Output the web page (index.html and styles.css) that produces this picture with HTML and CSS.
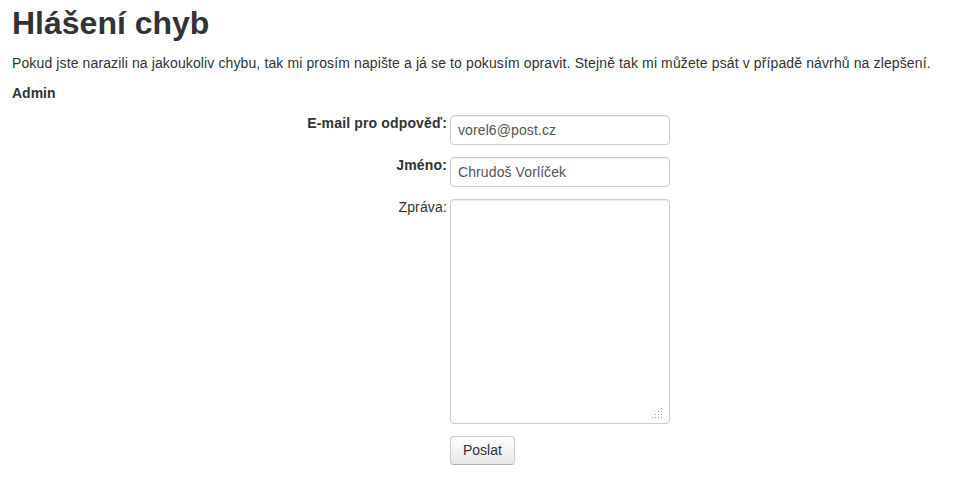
FILE: index.html
```html
<!DOCTYPE html>
<html lang="cs">
<head>
<meta charset="utf-8">
<title>Hlášení chyb</title>
<link rel="stylesheet" href="styles.css">
</head>
<body>
<div class="page">
  <h1 class="title">Hlášení chyb</h1>
  <p class="intro">Pokud jste narazili na jakoukoliv chybu, tak mi prosím napište a já se to pokusím opravit. Stejně tak mi můžete psát v případě návrhů na zlepšení.</p>
  <p class="section">Admin</p>
  <form class="form">
    <label class="label strong" for="email">E-mail pro odpověď:</label>
    <input class="field" id="email" type="text" value="vorel6@post.cz">
    <label class="label strong" for="name">Jméno:</label>
    <input class="field" id="name" type="text" value="Chrudoš Vorlíček">
    <label class="label" for="msg">Zpráva:</label>
    <div class="area-wrap">
      <textarea class="field area" id="msg"></textarea>
      <svg class="grip" width="10" height="10" viewBox="0 0 10 10" aria-hidden="true">
        <rect x="9" y="0" width="1" height="1"/>
        <rect x="6" y="3" width="1" height="1"/><rect x="9" y="3" width="1" height="1"/>
        <rect x="3" y="6" width="1" height="1"/><rect x="6" y="6" width="1" height="1"/><rect x="9" y="6" width="1" height="1"/>
        <rect x="0" y="9" width="1" height="1"/><rect x="3" y="9" width="1" height="1"/><rect x="6" y="9" width="1" height="1"/><rect x="9" y="9" width="1" height="1"/>
      </svg>
    </div>
    <span></span>
    <div><button class="btn" type="button">Poslat</button></div>
  </form>
</div>
</body>
</html>
```
FILE: styles.css
```css
html, body { margin: 0; padding: 0; background: #fff; }
body {
  font-family: "Liberation Sans", Arial, Helvetica, sans-serif;
  font-size: 14px;
  line-height: 20px;
  color: #333;
}
.page { padding: 5px 12px 0 12px; }
.title {
  margin: 0 0 12px 0;
  font-size: 32px;
  line-height: 36px;
  font-weight: bold;
  color: #333;
}
.intro { margin: 0 0 10px 0; letter-spacing: 0.12px; }
.section { margin: 0 0 10px 0; font-weight: bold; }
.form {
  display: grid;
  grid-template-columns: 435px 220px;
  column-gap: 3px;
  row-gap: 12px;
  margin-top: 12px;
}
.label {
  text-align: right;
  line-height: 16px;
  letter-spacing: 0.15px;
}
.strong { font-weight: bold; }
.field {
  box-sizing: border-box;
  width: 220px;
  height: 30px;
  margin: 0;
  padding: 4px 7px;
  font-family: "Liberation Sans", Arial, Helvetica, sans-serif;
  font-size: 14px;
  line-height: 20px;
  letter-spacing: 0.1px;
  color: #555;
  background: #fff;
  border: 1px solid #ccc;
  border-radius: 4px;
  box-shadow: inset 0 1px 1px rgba(0,0,0,0.075);
  outline: none;
}
.area-wrap { position: relative; width: 220px; height: 225px; }
.area { display: block; height: 225px; resize: none; }
.grip {
  position: absolute;
  right: 8px;
  bottom: 6px;
  fill: #a0a0a0;
}
.btn {
  box-sizing: border-box;
  height: 29px;
  padding: 4px 12px;
  font-family: "Liberation Sans", Arial, Helvetica, sans-serif;
  font-size: 14px;
  line-height: 19px;
  color: #333;
  background: linear-gradient(#ffffff, #e6e6e6);
  border: 1px solid #ccc;
  border-bottom-color: #b3b3b3;
  border-radius: 4px;
  box-shadow: inset 0 1px 0 rgba(255,255,255,.2), 0 1px 2px rgba(0,0,0,.05);
}
```
